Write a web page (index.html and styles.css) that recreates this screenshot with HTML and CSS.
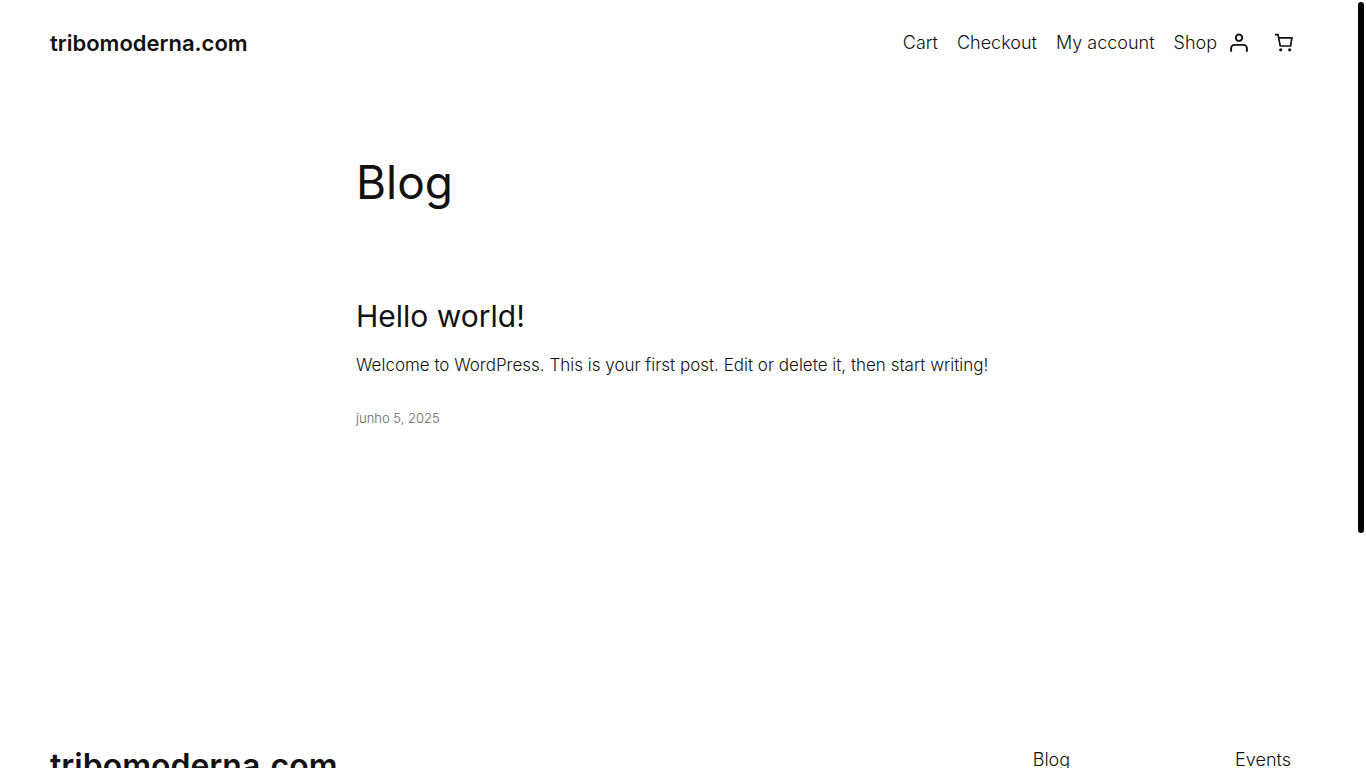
FILE: index.html
```html
<!DOCTYPE html>
<html lang="pt">
<head>
<meta charset="utf-8">
<title>Blog – tribomoderna.com</title>
<link rel="stylesheet" href="styles.css">
</head>
<body>
<div class="page">
  <header class="header">
    <a class="site-title" href="#">tribomoderna.com</a>
    <div class="header-right">
      <nav class="nav" aria-label="Main">
        <a href="#">Cart</a>
        <a href="#">Checkout</a>
        <a href="#">My account</a>
        <a href="#">Shop</a>
      </nav>
      <a class="icon-link" href="#" aria-label="Login">
        <svg class="icon" viewBox="0 0 18 18" fill="none" stroke="currentColor" stroke-width="1.9"><circle cx="9" cy="3.7" r="3.2"/><path d="M1.1 17.7v-3.4a3.4 3.4 0 0 1 3.4-3.4h9a3.4 3.4 0 0 1 3.4 3.4v3.4"/></svg>
      </a>
      <button class="icon-link cart" type="button" aria-label="Cart">
        <svg class="icon" viewBox="0 0 18 18" fill="none" stroke="currentColor" stroke-width="1.7"><path d="M0 .7h3l2.2 11.3h10.4L16.9 3.9H3.6"/><circle cx="5.7" cy="15.8" r="1.6" fill="currentColor" stroke="none"/><circle cx="14.7" cy="15.8" r="1.6" fill="currentColor" stroke="none"/></svg>
      </button>
    </div>
  </header>
  <main class="content">
    <h1 class="page-title">Blog</h1>
    <article class="post">
      <h2 class="post-title"><a href="#">Hello world!</a></h2>
      <p class="excerpt">Welcome to WordPress. This is your first post. Edit or delete it, then start writing!</p>
      <a class="date" href="#"><time datetime="2025-06-05">junho 5, 2025</time></a>
    </article>
  </main>
  <footer class="footer">
    <a class="footer-title" href="#">tribomoderna.com</a>
    <nav class="footer-nav" aria-label="Footer">
      <a href="#">Blog</a>
      <a href="#">Events</a>
    </nav>
  </footer>
</div>
<div class="scroll-thumb"></div>
</body>
</html>
```
FILE: styles.css
```css
* { box-sizing: border-box; }
body {
  margin: 0;
  height: 100vh;
  overflow: hidden;
  background: #fff;
  color: #111;
  font: 300 18px/26px Inter, "Liberation Sans", sans-serif;
}
a { color: inherit; text-decoration: none; }
h1, h2, p { margin: 0; }
h1, h2 { font-weight: 400; }
.header {
  display: flex;
  align-items: center;
  justify-content: space-between;
  padding: 30px 73px 30px 50px;
}
.site-title { font-size: 22px; line-height: 24px; font-weight: 600; }
.header-right { display: flex; align-items: center; gap: 13px; }
.nav { display: flex; gap: 19px; }
.icon-link { display: flex; padding: 0; border: 0; background: none; color: inherit; }
.cart { margin-left: 14px; }
.icon { width: 18px; height: 18px; overflow: visible; }
.content {
  width: 100%;
  max-width: 654px;
  margin: 0 auto;
  padding-top: 68px;
}
.page-title { font-size: 46px; line-height: 56px; }
.post { padding-top: 87px; }
.post-title { font-size: 30px; line-height: 38px; }
.excerpt { padding-top: 17px; font-size: 17px; }
.date { display: block; padding-top: 27px; font-size: 13px; color: #666; }
.footer {
  display: flex;
  justify-content: space-between;
  padding: 316px 75px 0 50px;
}
.footer-title { font-size: 32px; line-height: 38px; font-weight: 600; }
.footer-nav { display: flex; gap: 165px; }
.scroll-thumb {
  position: absolute;
  top: 2px;
  right: 2px;
  width: 6px;
  height: 531px;
  border-radius: 3px;
  background: #000;
}
```
